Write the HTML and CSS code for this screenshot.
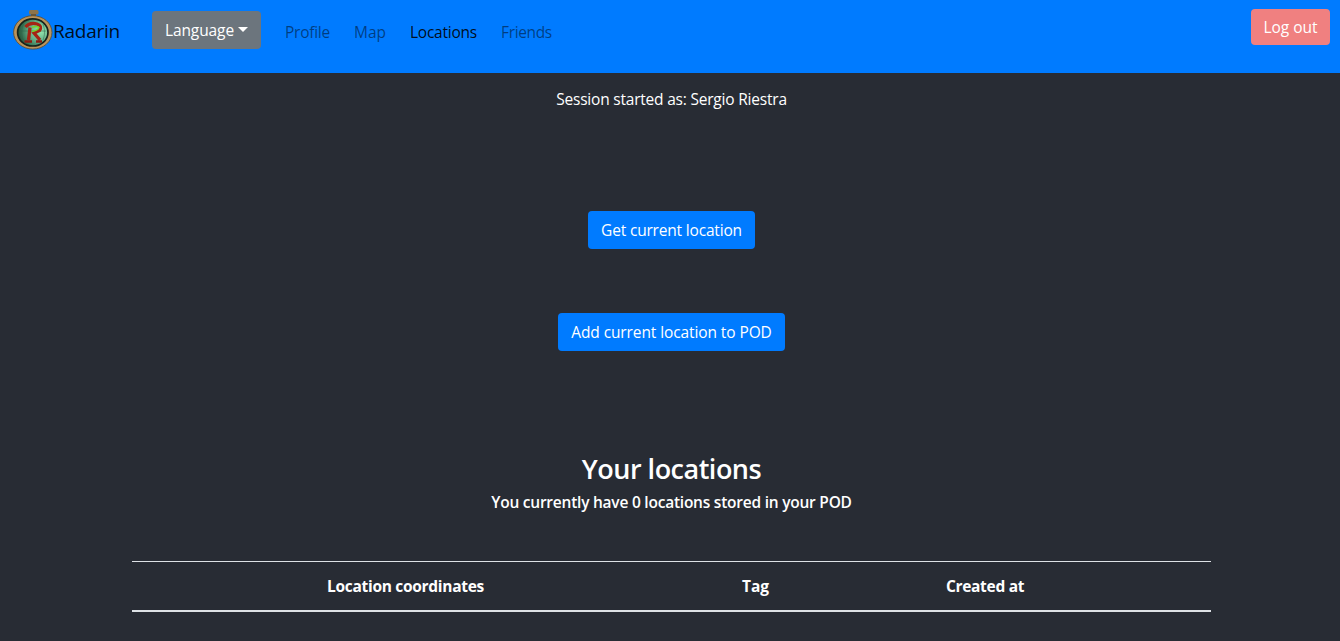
FILE: index.html
```html
<!DOCTYPE html>
<html lang="en">
<head>
<meta charset="utf-8">
<title>Radarin</title>
<link rel="stylesheet" href="styles.css">
</head>
<body>
<nav class="navbar">
  <a class="brand">
    <svg class="logo" width="40" height="40" viewBox="0 0 40 40">
      <defs>
        <radialGradient id="face" cx=".75" cy=".45" r=".75">
          <stop offset="0" stop-color="#96e8b0"/>
          <stop offset=".5" stop-color="#62b088"/>
          <stop offset="1" stop-color="#1f4f34"/>
        </radialGradient>
      </defs>
      <rect x="16" y="0" width="9.5" height="4.5" rx="1.5" fill="#8c744b"/>
      <path d="M18 4h5v3h-5z" fill="#66563a"/>
      <ellipse cx="19.8" cy="22.4" rx="19.2" ry="16.7" fill="#b9935c" stroke="#5d5037" stroke-width=".9"/>
      <ellipse cx="19.8" cy="22.4" rx="15.2" ry="13.6" fill="url(#face)" stroke="#16221b" stroke-width="1.7"/>
      <path d="M7 21h26M11 13c-3 6-3 13 0 19M30 14c2 6 2 11 0 16" fill="none" stroke="#2f6149" stroke-width=".5"/>
      <path d="M12.500 17Q17 12 24 14Q29.500 16 26.500 20.500L21 23L27 30M15.500 30L17 17.500" fill="none" stroke="#a52414" stroke-width="3.3"/>
      <path d="M11.500 31.500h7.500M23 31.500h6" stroke="#8c1a10" stroke-width="2.4"/>
      <path d="M19 17.500Q24 15.500 26 17.500Q25 20.500 19 21.500" fill="none" stroke="#75d427" stroke-width="1.4"/>
    </svg>
    <span class="brand-name">Radarin</span>
  </a>
  <button class="btn btn-language"><span class="t-language">Language</span><span class="caret"></span></button>
  <div class="links">
    <a class="link t-profile">Profile</a>
    <a class="link t-map">Map</a>
    <a class="link active t-locations">Locations</a>
    <a class="link t-friends">Friends</a>
  </div>
  <button class="btn btn-logout">Log out</button>
</nav>
<main class="content">
  <p class="session">Session started as: Sergio Riestra</p>
  <button class="btn btn-get">Get current location</button>
  <button class="btn btn-add">Add current location to POD</button>
  <h2 class="title">Your locations</h2>
  <h3 class="count">You currently have 0 locations stored in your POD</h3>
  <table class="table">
    <colgroup><col class="c-coords"><col class="c-tag"><col class="c-created"><col></colgroup>
    <thead><tr><th>Location coordinates</th><th>Tag</th><th>Created at</th><th></th></tr></thead>
  </table>
</main>
</body>
</html>
```
FILE: styles.css
```css
* { box-sizing: border-box; }
body {
  margin: 0;
  height: 641px;
  overflow: hidden;
  background: #282c34;
  color: #fff;
  font: 15.5px/24px "Open Sans", "Noto Sans", sans-serif;
}
.navbar {
  display: flex;
  align-items: flex-start;
  height: 73px;
  padding: 9px 10px 0 13px;
  background: #007bff;
}
.brand { display: flex; width: 139px; padding-top: 1px; color: rgba(0, 0, 0, .9); }
.logo { flex: none; }
.brand-name { font-size: 19px; line-height: 42px; letter-spacing: -.25px; }
.btn {
  display: flex;
  align-items: center;
  justify-content: center;
  height: 38px;
  padding: 0;
  border: 0;
  border-radius: 4px;
  color: #fff;
  background: #007bff;
  font: inherit;
  white-space: nowrap;
}
.btn-language { width: 109px; margin-top: 2px; background: #6c757d; letter-spacing: -.1px; }
.caret {
  margin: -2px 0 0 4px;
  border-top: 5px solid #fff;
  border-left: 5px solid transparent;
  border-right: 5px solid transparent;
}
.links { display: flex; gap: 24px; margin: 11px 0 0 24px; letter-spacing: -.25px; }
.link { color: rgba(0, 0, 0, .5); white-space: nowrap; }
.link.active { color: rgba(0, 0, 0, .9); }
.t-profile { width: 45px; }
.t-map { width: 32px; letter-spacing: 0; }
.t-locations { width: 67px; }
.t-friends { letter-spacing: -.35px; }
.btn-logout { width: 79px; height: 36px; margin-left: auto; background: #f08080; }
.content {
  display: flex;
  flex-direction: column;
  align-items: center;
  width: 1079px;
  margin-left: 132px;
  padding-top: 14px;
}
.session { margin: 0 0 100px; letter-spacing: -.21px; }
.btn-get { width: 167px; margin-bottom: 64px; letter-spacing: -.18px; }
.btn-add { width: 227px; margin-bottom: 101px; letter-spacing: -.1px; }
.title { margin: 0 0 4px; font-size: 27px; line-height: 34px; font-weight: 600; letter-spacing: -.5px; }
.count { margin: 0 0 47px; font-size: 15.5px; line-height: 24px; font-weight: 600; letter-spacing: -.23px; }
.table { width: 1079px; table-layout: fixed; border-collapse: collapse; }
.table th {
  height: 49px;
  padding: 1px 0 0;
  border-top: 1px solid #dee2e6;
  border-bottom: 2px solid #dee2e6;
  font-weight: 700;
  letter-spacing: -.3px;
}
.table th:nth-child(2) { letter-spacing: 0; }
.c-coords { width: 547px; }
.c-tag { width: 153px; }
.c-created { width: 306px; }
```
